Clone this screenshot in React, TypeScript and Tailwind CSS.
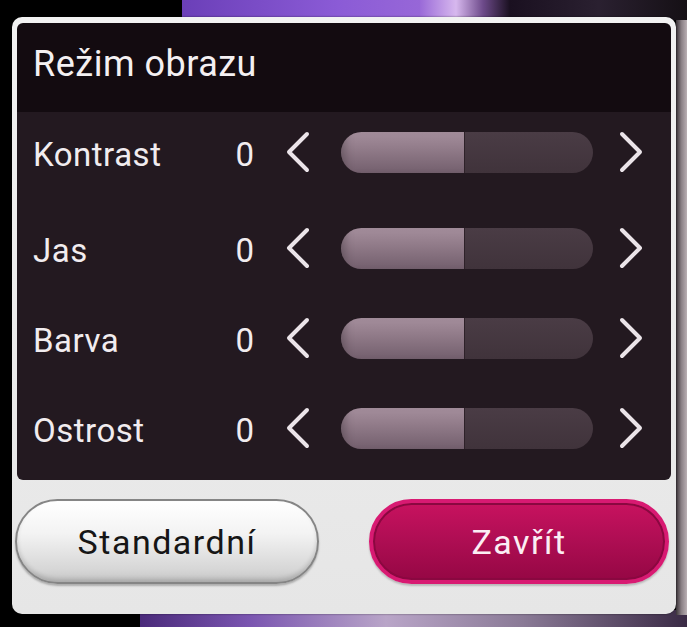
import React from "react";

const rows = ["Kontrast", "Jas", "Barva", "Ostrost"];
const rowMargins = ["mt-0", "mt-[16px]", "mt-[10px]", "mt-[10px]"];

function ChevronLeft() {
  return (
    <svg width="26" height="42" viewBox="0 0 26 42" className="shrink-0">
      <polyline points="22,3 4,21 22,39" fill="none" stroke="#ebe4e9" strokeWidth="4" strokeLinecap="round" strokeLinejoin="round" />
    </svg>
  );
}
function ChevronRight() {
  return (
    <svg width="26" height="42" viewBox="0 0 26 42" className="shrink-0">
      <polyline points="4,3 22,21 4,39" fill="none" stroke="#ebe4e9" strokeWidth="4" strokeLinecap="round" strokeLinejoin="round" />
    </svg>
  );
}

function Row({ label, mt }: { label: string; mt: string }) {
  return (
    <div className={`flex h-[80px] items-center ${mt}`}>
      <div className="w-[190px] pl-[16px] pt-[4px] text-[33px] leading-none tracking-[0.5px] text-[#f1ecef]">{label}</div>
      <div className="w-[47px] pt-[4px] text-right text-[33px] leading-none text-[#f1ecef]">0</div>
      <div className="ml-[31px]">
        <ChevronLeft />
      </div>
      <div className="ml-[30px] flex h-[41px] w-[252px] overflow-hidden rounded-full">
        <div className="h-full w-[123px] bg-[linear-gradient(to_bottom,#a48e9c_0%,#947e8c_35%,#735f6d_100%)] shadow-[inset_10px_0_10px_-6px_rgba(0,0,0,0.25)]" />
        <div className="h-full w-px bg-[#2e2229]" />
        <div className="h-full flex-1 bg-[linear-gradient(to_bottom,#4a3c45_0%,#40333b_100%)]" />
      </div>
      <div className="ml-[25px]">
        <ChevronRight />
      </div>
    </div>
  );
}

export default function App() {
  return (
    <div className="relative h-[627px] w-[687px] overflow-hidden bg-black font-['Roboto',sans-serif]">
      {/* background picture behind the dialog */}
      <div className="absolute left-[182px] top-0 h-[20px] w-[260px] bg-[linear-gradient(to_right,#6b3fb8,#8b5bd6_60%,#9a6ad8)]" />
      <div className="absolute left-[420px] top-0 h-[20px] w-[90px] bg-[linear-gradient(to_right,#9a6ad8,#d7b8ee_40%,#6d4a8a_70%,#1a1020)]" />
      <div className="absolute left-[510px] top-0 h-[20px] w-[177px] bg-[linear-gradient(to_right,#1a1020,#2a2030_50%,#151015)]" />
      <div className="absolute left-[140px] top-[610px] h-[17px] w-[547px] bg-[linear-gradient(to_right,#4a2a7a,#7a55b0_20%,#b9a5c8_45%,#8a7a96_70%,#3a2a45)]" />
      <div className="absolute right-0 top-[20px] h-[595px] w-[11px] bg-[linear-gradient(to_right,#3a3338,#8a8085_50%,#b9afb3)]" />

      <div className="relative pl-[12px] pt-[17px]">
        <div className="flex h-[597px] w-[664px] flex-col rounded-[10px] bg-[linear-gradient(to_bottom,#f2f2f2,#e6e6e6)] shadow-[0_0_2px_rgba(0,0,0,0.6)]">
          <div className="mx-[5px] mt-[6px] flex h-[457px] flex-col overflow-hidden rounded-[6px]">
            <div className="flex h-[89px] items-center bg-[#130b10] pl-[16px] pb-[8px] text-[36px] leading-none tracking-[0.5px] text-[#f4f0f2]">
              Režim obrazu
            </div>
            <div className="flex flex-1 flex-col bg-[#231920]">
              {rows.map((r, i) => (
                <Row key={r} label={r} mt={rowMargins[i]} />
              ))}
            </div>
          </div>
          <div className="flex flex-1 items-start gap-[50px] pl-[3px] pr-[7px] pt-[19px]">
            <button className="flex h-[85px] w-[304px] items-center justify-center rounded-full border-[2px] border-[#858585] bg-[linear-gradient(to_bottom,#ffffff_0%,#f3f3f3_40%,#d6d6d6_85%,#c4c4c4_100%)] text-[34px] leading-none tracking-[1.5px] text-[#161616] shadow-[inset_0_-3px_4px_rgba(0,0,0,0.15),0_2px_2px_rgba(0,0,0,0.25)]">
              Standardní
            </button>
            <button className="flex h-[85px] w-[300px] items-center justify-center rounded-full border-[4px] border-[#d81a72] bg-[linear-gradient(to_bottom,#c8125f_0%,#b00e54_45%,#950744_100%)] text-[34px] leading-none tracking-[1.5px] text-[#fbeef4] shadow-[inset_0_0_0_2px_#8a0840,0_2px_2px_rgba(0,0,0,0.2)]">
              Zavřít
            </button>
          </div>
        </div>
      </div>
    </div>
  );
}
